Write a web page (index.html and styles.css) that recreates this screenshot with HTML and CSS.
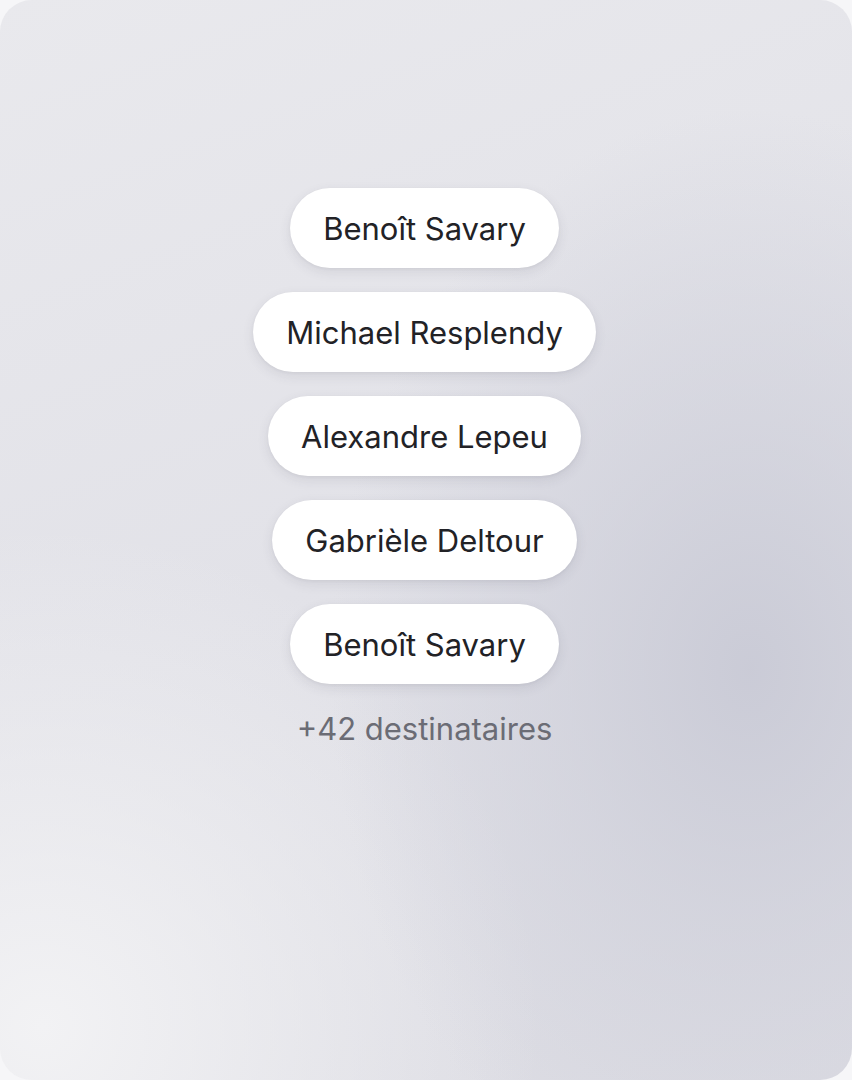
FILE: index.html
```html
<!DOCTYPE html>
<html lang="fr">
<head>
    <meta charset="UTF-8">
    <meta name="viewport" content="width=device-width, initial-scale=1.0">
    <title>Destinataires</title>
    <link rel="stylesheet" href="styles.css">
</head>
<body>
<div class="card">
    <ul class="recipient-list">
        <li class="recipient">Benoît Savary</li>
        <li class="recipient">Michael Resplendy</li>
        <li class="recipient">Alexandre Lepeu</li>
        <li class="recipient">Gabrièle Deltour</li>
        <li class="recipient">Benoît Savary</li>
    </ul>
    <p class="more">+42 destinataires</p>
</div>
</body>
</html>
```

FILE: styles.css
```css
html, body {
    margin: 0;
    background-color: #f6f6f8;
    font-family: Inter, "Noto Sans", sans-serif;
}

.card {
    width: 852px;
    height: 1080px;
    box-sizing: border-box;
    border-radius: 32px;
    padding: 188px 3px 0 0;
    display: flex;
    flex-direction: column;
    align-items: center;
    background:
        radial-gradient(ellipse 420px 560px at 88% 62%, rgba(200, 201, 213, 0.9) 0%, rgba(205, 206, 217, 0.6) 45%, rgba(210, 211, 221, 0) 100%),
        radial-gradient(ellipse 500px 500px at 5% 95%, rgba(242, 242, 244, 1) 0%, rgba(242, 242, 244, 0) 100%),
        linear-gradient(160deg, #e9e9ed 0%, #e2e2e8 50%, #dcdce3 100%);
}

.recipient-list {
    list-style: none;
    margin: 0;
    padding: 0;
    display: flex;
    flex-direction: column;
    align-items: center;
    gap: 24px;
}

.recipient {
    height: 80px;
    box-sizing: border-box;
    padding: 0 33px;
    display: flex;
    align-items: center;
    border-radius: 40px;
    background-color: #fff;
    color: #222226;
    font-size: 31px;
    box-shadow: 0 4px 12px rgba(60, 60, 80, 0.10), 0 1px 3px rgba(60, 60, 80, 0.06);
}

.more {
    margin: 25px 0 0;
    color: #6b6c75;
    font-size: 31px;
    line-height: 40px;
}
```
